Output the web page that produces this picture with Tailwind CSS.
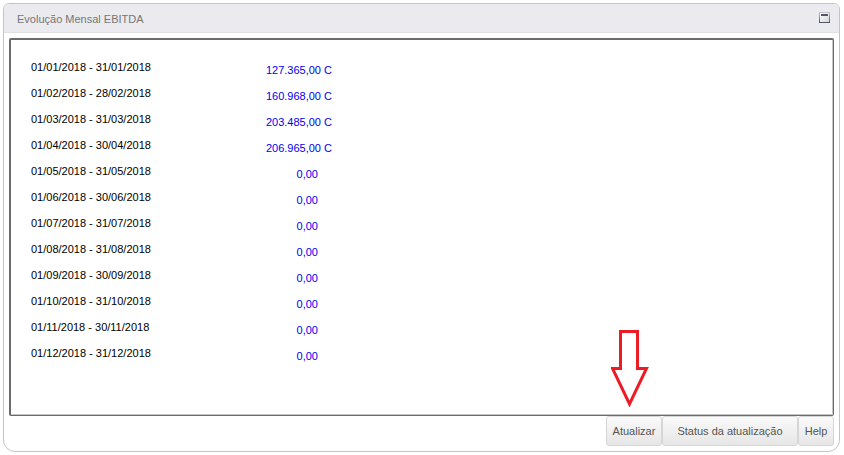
<!DOCTYPE html>
<html lang="pt-BR">
<head>
    <meta charset="UTF-8">
    <meta name="viewport" content="width=device-width, initial-scale=1.0">
    <title>Evolução Mensal EBITDA</title>
    <script src="https://cdn.jsdelivr.net/npm/@tailwindcss/browser@4"></script>
</head>
<body class="bg-white font-['Liberation_Sans',Arial,sans-serif] text-[11px] leading-4">
    <div class="flex min-h-screen flex-col pt-[3px] pr-1 pb-[3px] pl-[3px]">
        <section class="flex flex-1 flex-col rounded-t-md rounded-b-xl border border-[#c4c4c4]">
            <header class="flex h-[29px] items-center justify-between rounded-t-md border-b border-[#e0e0e2] bg-[#eaeaef] pr-[9px] pb-px pl-3">
                <h1 class="pl-px pt-[3px] text-[#777777]">Evolução Mensal EBITDA</h1>
                <button type="button" aria-label="Minimizar" class="block">
                    <svg class="size-[11px]" viewBox="0 0 11 11" shape-rendering="crispEdges" aria-hidden="true">
                        <defs>
                            <linearGradient id="edge" x1="0" y1="0" x2="0" y2="1">
                                <stop offset="0" stop-color="#c8c8cc"/>
                                <stop offset="1" stop-color="#4c5068"/>
                            </linearGradient>
                            <linearGradient id="face" x1="0" y1="0" x2="1" y2="1">
                                <stop offset="0" stop-color="#ffffff"/>
                                <stop offset="1" stop-color="#d4d4da"/>
                            </linearGradient>
                        </defs>
                        <rect width="11" height="11" fill="url(#edge)"/>
                        <rect x="1" y="1" width="9" height="9" fill="url(#face)"/>
                        <rect x="2" y="2" width="7" height="2" fill="#50546c"/>
                    </svg>
                </button>
            </header>

            <main class="flex flex-1 flex-col p-[5px]">
                <div class="flex flex-1 rounded-xs border-t-2 border-l-2 border-r border-b border-[#6b6b6b]">
                    <div class="flex-1 border-r border-b border-[#c6c6c6] pt-3.5 pl-5 pb-4">
                        <table>
                            <tbody id="rows"></tbody>
                        </table>
                    </div>
                </div>

                <div class="flex justify-end text-[#555555]">
                    <div class="relative">
                        <button type="button" class="h-[30px] w-14 rounded-[3px] border border-[#d6d6d6] bg-linear-to-b from-[#fafafa] to-[#e6e6e6]">Atualizar</button>
                        <svg class="pointer-events-none absolute bottom-full left-[5px] mb-[9px] h-[78px] w-[38px]" viewBox="0 0 38 78" fill="none" stroke="#ed1c24" stroke-width="3" aria-hidden="true">
                            <path d="M9.500 2.500H26.500V39.500H35.500L18.500 75L1.500 39.500H9.500Z"/>
                        </svg>
                    </div>
                    <button type="button" class="h-[30px] w-[136px] rounded-[3px] border border-[#d6d6d6] bg-linear-to-b from-[#fafafa] to-[#e6e6e6]">Status da atualização</button>
                    <button type="button" class="h-[30px] w-9 rounded-[3px] border border-[#d6d6d6] bg-linear-to-b from-[#fafafa] to-[#e6e6e6]">Help</button>
                </div>
            </main>
        </section>
    </div>

    <script>
        const months = [
            ['01/01/2018 - 31/01/2018', '127.365,00 C'],
            ['01/02/2018 - 28/02/2018', '160.968,00 C'],
            ['01/03/2018 - 31/03/2018', '203.485,00 C'],
            ['01/04/2018 - 30/04/2018', '206.965,00 C'],
            ['01/05/2018 - 31/05/2018', '0,00'],
            ['01/06/2018 - 30/06/2018', '0,00'],
            ['01/07/2018 - 31/07/2018', '0,00'],
            ['01/08/2018 - 31/08/2018', '0,00'],
            ['01/09/2018 - 30/09/2018', '0,00'],
            ['01/10/2018 - 31/10/2018', '0,00'],
            ['01/11/2018 - 30/11/2018', '0,00'],
            ['01/12/2018 - 31/12/2018', '0,00'],
        ];

        // Zero balances have no C/D suffix, so they keep its space on the right
        document.getElementById('rows').innerHTML = months.map(([period, value]) => `
            <tr class="h-[26px] align-top">
                <th scope="row" class="w-48 pt-[5px] text-left font-normal text-black">${period}</th>
                <td class="w-[109px] pt-2 text-right text-[#0000f0] ${value.endsWith('C') ? '' : 'pr-3.5'}">${value}</td>
            </tr>
        `).join('');
    </script>
</body>
</html>
